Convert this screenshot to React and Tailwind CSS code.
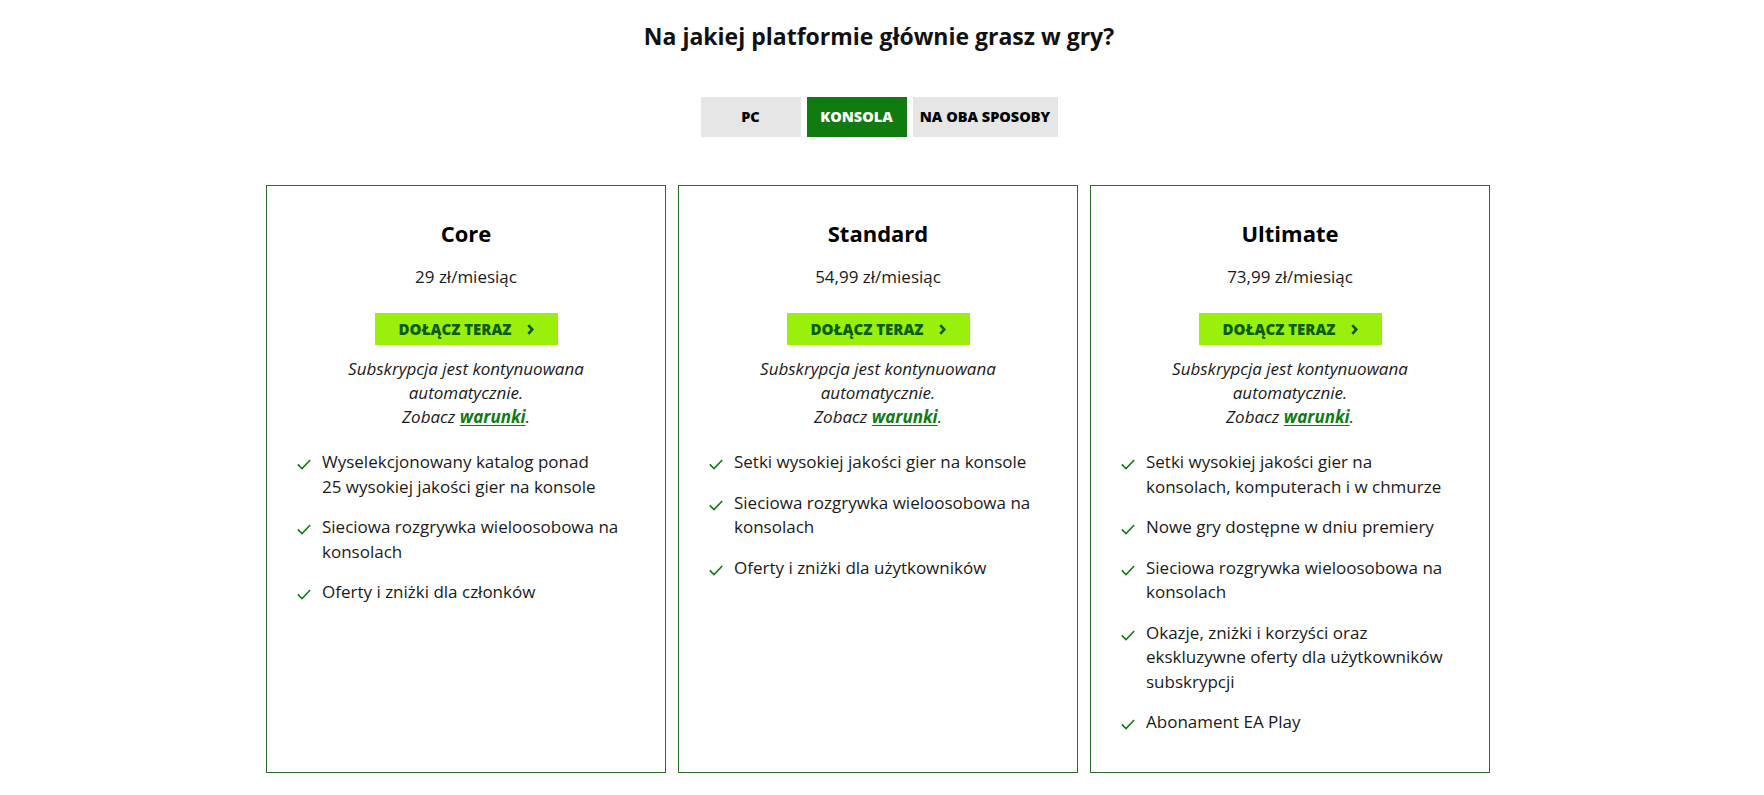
import React from "react";

const plans = [
  {
    name: "Core",
    price: "29 zł/miesiąc",
    features: [
      ["Wyselekcjonowany katalog ponad", "25 wysokiej jakości gier na konsole"],
      ["Sieciowa rozgrywka wieloosobowa na konsolach"],
      ["Oferty i zniżki dla członków"],
    ],
  },
  {
    name: "Standard",
    price: "54,99 zł/miesiąc",
    features: [
      ["Setki wysokiej jakości gier na konsole"],
      ["Sieciowa rozgrywka wieloosobowa na konsolach"],
      ["Oferty i zniżki dla użytkowników"],
    ],
  },
  {
    name: "Ultimate",
    price: "73,99 zł/miesiąc",
    features: [
      ["Setki wysokiej jakości gier na konsolach, komputerach i w chmurze"],
      ["Nowe gry dostępne w dniu premiery"],
      ["Sieciowa rozgrywka wieloosobowa na konsolach"],
      ["Okazje, zniżki i korzyści oraz ekskluzywne oferty dla użytkowników subskrypcji"],
      ["Abonament EA Play"],
    ],
  },
];

function Check() {
  return (
    <svg width="14" height="11" viewBox="0 0 14 11" className="shrink-0 mt-[9px]" fill="none">
      <path d="M0.8 5.4 L5 9.6 L13.2 1" stroke="#107c10" strokeWidth="1.6" />
    </svg>
  );
}

function Chevron() {
  return (
    <svg width="7" height="11" viewBox="0 0 7 11" fill="none" className="shrink-0">
      <path d="M1.3 1.2 L5.3 5.5 L1.3 9.8" stroke="#0b5c0b" strokeWidth="2.6" />
    </svg>
  );
}

function Card({ plan }) {
  return (
    <div className="w-[400px] h-[588px] border border-[#2a6e2a] flex flex-col items-center pt-[31px] px-[30px]">
      <h2 className="text-[22px] font-bold leading-[32px] text-black">{plan.name}</h2>
      <p className="mt-[16px] text-[17px] leading-[24px] text-[#1a1a1a]">{plan.price}</p>
      <button className="mt-[24px] w-[183px] h-[32px] bg-[#9bf00b] flex items-center justify-center gap-[15px] text-[15px] font-extrabold text-[#0b5c0b]">
        <span>DOŁĄCZ TERAZ</span>
        <Chevron />
      </button>
      <p className="mt-[12px] text-center italic text-[17px] leading-[24px] text-[#1a1a1a] w-[320px]">
        Subskrypcja jest kontynuowana automatycznie.
        <br />
        Zobacz{" "}
        <a className="font-bold text-[#107c10] underline underline-offset-2">warunki</a>.
      </p>
      <ul className="mt-[21px] self-stretch flex flex-col gap-[16px]">
        {plan.features.map((f, i) => (
          <li key={i} className="flex gap-[11px] text-[17px] leading-[24.5px] text-[#1a1a1a]">
            <Check />
            <span className="w-[306px]">
              {f.map((line, j) => (
                <React.Fragment key={j}>
                  {j > 0 && <br />}
                  {line}
                </React.Fragment>
              ))}
            </span>
          </li>
        ))}
      </ul>
    </div>
  );
}

export default function App() {
  return (
    <div
      className="w-[1764px] h-[795px] bg-white text-black"
      style={{ fontFamily: '"Open Sans", "Noto Sans", sans-serif' }}
    >
      <div className="flex flex-col items-center pr-[6px]">
        <h1 className="mt-[19px] text-[23px] font-bold leading-[34px] text-[#111]">
          Na jakiej platformie głównie grasz w gry?
        </h1>
        <div className="mt-[44px] flex gap-[6px]">
          <button className="w-[100px] h-[40px] bg-[#e6e6e6] text-[14.5px] font-extrabold text-black">PC</button>
          <button className="w-[100px] h-[40px] bg-[#107c10] text-[14.5px] font-extrabold text-white">KONSOLA</button>
          <button className="w-[145px] h-[40px] bg-[#e6e6e6] text-[14.5px] font-extrabold text-black">NA OBA SPOSOBY</button>
        </div>
      </div>
      <div className="mt-[48px] flex justify-center gap-[12px] pr-[8px]">
        {plans.map((p) => (
          <Card key={p.name} plan={p} />
        ))}
      </div>
    </div>
  );
}
